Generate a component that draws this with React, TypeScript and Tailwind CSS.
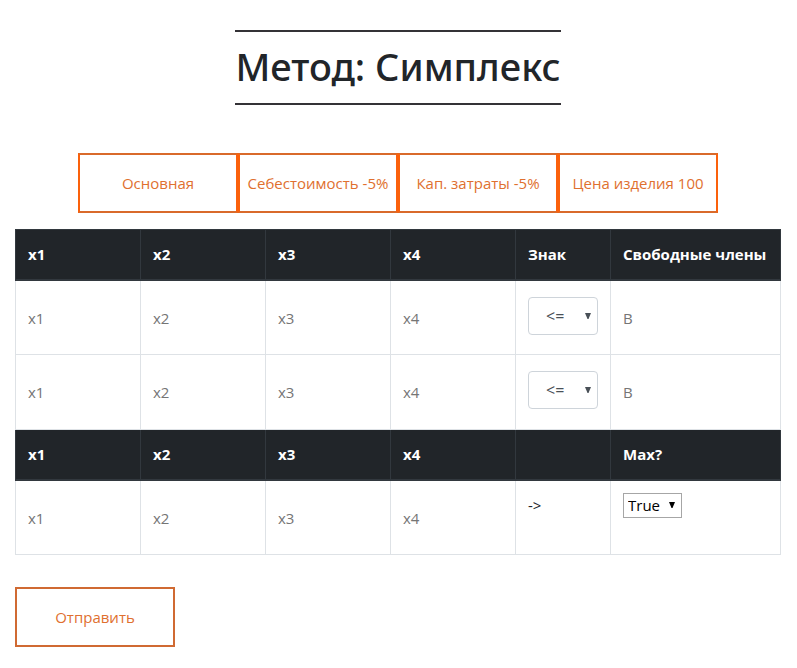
import React from "react";

const scenarios = ["Основная", "Себестоимость -5%", "Кап. затраты -5%", "Цена изделия 100"];
const variables = ["x1", "x2", "x3", "x4"];

const headCell =
  "h-[50px] border border-b-2 border-[#32383e] bg-[#212529] px-3 text-left font-bold whitespace-nowrap text-white";
const bodyCell = "h-[75px] border border-[#dee2e6] px-3 align-top";

function Arrow({ className }: { className: string }) {
  return (
    <svg
      aria-hidden="true"
      viewBox="0 0 6 6"
      className={`pointer-events-none absolute h-[6px] w-[6px] ${className}`}
    >
      <path d="M0 0H6L3.5 6H2.5Z" fill="currentColor" />
    </svg>
  );
}

function CoefficientInput({ label, name }: { label: string; name: string }) {
  return (
    <input
      aria-label={name}
      placeholder={label}
      className="mt-3 block h-[50px] w-full min-w-0 bg-transparent text-[#212529] outline-none placeholder:text-[#757575]"
    />
  );
}

function HeadRow({ sign, last }: { sign: string; last: string }) {
  return (
    <tr>
      {variables.map((v) => (
        <th key={v} className={headCell}>{v}</th>
      ))}
      <th className={headCell}>{sign}</th>
      <th className={headCell}>{last}</th>
    </tr>
  );
}

function ConstraintRow({ row }: { row: number }) {
  return (
    <tr>
      {variables.map((v) => (
        <td key={v} className={bodyCell}>
          <CoefficientInput label={v} name={`${v}, строка ${row}`} />
        </td>
      ))}
      <td className={bodyCell}>
        <div className="relative mt-4 h-[38px] w-[70px] text-[#495057]">
          <select
            aria-label={`Знак, строка ${row}`}
            className="h-full w-full appearance-none rounded border border-[#ced4da] bg-white pl-[17px] text-base"
          >
            <option>{"<="}</option>
            <option>{">="}</option>
            <option>=</option>
          </select>
          <Arrow className="top-4 right-[7px]" />
        </div>
      </td>
      <td className={bodyCell}>
        <CoefficientInput label="B" name={`Свободный член, строка ${row}`} />
      </td>
    </tr>
  );
}

export default function App() {
  return (
    <main className="bg-white pt-[30px] pr-4 pb-5 pl-[15px] font-['Open_Sans','Noto_Sans',sans-serif] text-[15px] leading-6 text-[#212529]">
      <h1 className="mx-auto flex h-[75px] w-fit items-center border-y-2 border-[#343236] pb-1 font-['Noto_Sans',sans-serif] text-[38px] leading-[48px] font-medium whitespace-nowrap">
        Метод: Симплекс
      </h1>

      <nav className="mt-12 flex justify-center">
        {scenarios.map((s) => (
          <button
            key={s}
            type="button"
            className="h-[60px] w-40 border-2 border-x-[#fb610c] border-y-[#d96a2b] text-[15px] whitespace-nowrap text-[#e0702f]"
          >
            {s}
          </button>
        ))}
      </nav>

      <form onSubmit={(e) => e.preventDefault()}>
        <table className="mt-4 w-full table-fixed border-collapse">
          <colgroup>
            <col className="w-[125px]" />
            <col className="w-[125px]" />
            <col className="w-[125px]" />
            <col className="w-[125px]" />
            <col className="w-[95px]" />
            <col />
          </colgroup>
          <thead>
            <HeadRow sign="Знак" last="Свободные члены" />
          </thead>
          <tbody>
            <ConstraintRow row={1} />
            <ConstraintRow row={2} />
            <HeadRow sign="" last="Max?" />
            <tr>
              {variables.map((v) => (
                <td key={v} className={bodyCell}>
                  <CoefficientInput label={v} name={`${v}, целевая функция`} />
                </td>
              ))}
              <td className={`${bodyCell} pt-3`}>{"->"}</td>
              <td className={bodyCell}>
                <div className="relative mt-3 h-[25px] w-[59px] text-black">
                  <select
                    aria-label="Max?"
                    className="h-full w-full appearance-none border border-[#a6a6a6] bg-white pl-1 text-[15px] leading-5"
                  >
                    <option>True</option>
                    <option>False</option>
                  </select>
                  <Arrow className="top-[9px] right-[7px]" />
                </div>
              </td>
            </tr>
          </tbody>
        </table>

        <button
          type="submit"
          className="mt-8 block h-[60px] w-40 border-2 border-[#d06a32] text-[15px] text-[#e0702f]"
        >
          Отправить
        </button>
      </form>
    </main>
  );
}
